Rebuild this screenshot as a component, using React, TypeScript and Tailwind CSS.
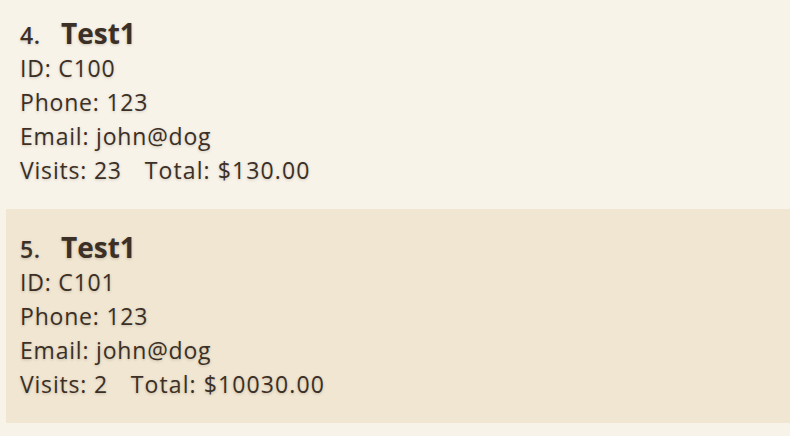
import React from 'react';

type Customer = {
  index: number;
  name: string;
  id: string;
  phone: string;
  email: string;
  visits: number;
  total: string;
};

const customers: Customer[] = [
  { index: 4, name: 'Test1', id: 'C100', phone: '123', email: 'john@dog', visits: 23, total: '$130.00' },
  { index: 5, name: 'Test1', id: 'C101', phone: '123', email: 'john@dog', visits: 2, total: '$10030.00' },
];

const CustomerCard = ({ c, shaded }: { c: Customer; shaded: boolean }) => (
  <div className={`pl-[14px] pt-[20px] pb-[22px] ${shaded ? 'bg-[#f0e6d1]' : 'bg-transparent'}`}>
    <div className="flex items-baseline h-[36px] leading-[36px]">
      <span className="text-[23px] font-semibold w-[41px] tracking-[0.5px]">{c.index}.</span>
      <span className="text-[28px] font-bold">{c.name}</span>
    </div>
    <div className="text-[23px] leading-[34px] tracking-[0.8px]">
      <div>ID: {c.id}</div>
      <div>Phone: {c.phone}</div>
      <div>Email: {c.email}</div>
      <div>
        Visits: {c.visits}
        <span className="ml-[23px] tracking-[1.1px]">Total: {c.total}</span>
      </div>
    </div>
  </div>
);

export default function App() {
  return (
    <div className="w-[790px] h-[436px] overflow-hidden bg-[#f8f3e9] text-[#3b2f26] font-['Open_Sans',sans-serif] [text-shadow:0_1px_3px_rgba(60,40,20,0.22)]">
      <div className="mt-[-5px] pl-[6px]">
        {customers.map((c, i) => (
          <CustomerCard key={c.id} c={c} shaded={i % 2 === 1} />
        ))}
      </div>
    </div>
  );
}
